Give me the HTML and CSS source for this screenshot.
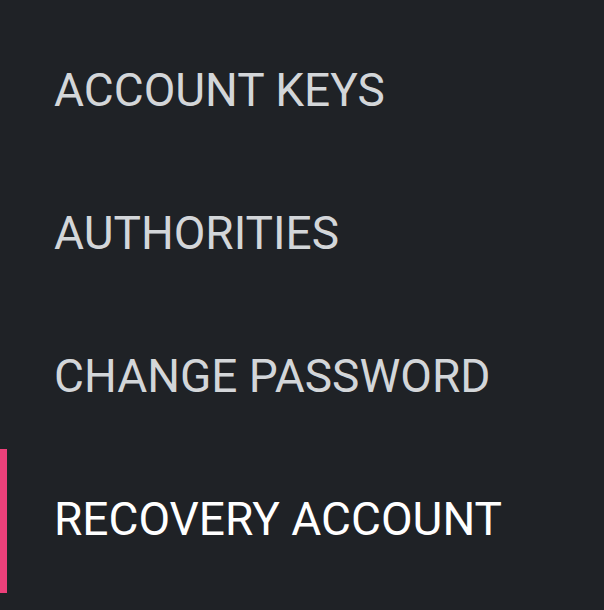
FILE: index.html
```html
<!DOCTYPE html>
<html lang="en">
<head>
<meta charset="utf-8">
<title>Account menu</title>
<link rel="stylesheet" href="styles.css">
</head>
<body>
<nav class="menu">
  <a class="menu-item" href="#">ACCOUNT KEYS</a>
  <a class="menu-item" href="#">AUTHORITIES</a>
  <a class="menu-item" href="#">CHANGE PASSWORD</a>
  <a class="menu-item active" href="#">RECOVERY ACCOUNT</a>
</nav>
</body>
</html>
```
FILE: styles.css
```css
html, body {
  margin: 0;
  padding: 0;
  background: #1f2226;
  height: 100%;
}
.menu {
  display: flex;
  flex-direction: column;
  padding-top: 20px;
  font-family: Roboto, "Liberation Sans", sans-serif;
}
.menu-item {
  position: relative;
  display: block;
  height: 143px;
  line-height: 141px;
  padding-bottom: 2px;
  box-sizing: border-box;
  padding-left: 54px;
  font-size: 46px;
  font-weight: 400;
  color: #d3d6d9;
  text-decoration: none;
  white-space: nowrap;
}
.menu-item.active {
  color: #ffffff;
}
.menu-item.active::before {
  content: "";
  position: absolute;
  left: 0;
  top: 0;
  width: 7px;
  height: 144px;
  background: #ec407a;
}
```
